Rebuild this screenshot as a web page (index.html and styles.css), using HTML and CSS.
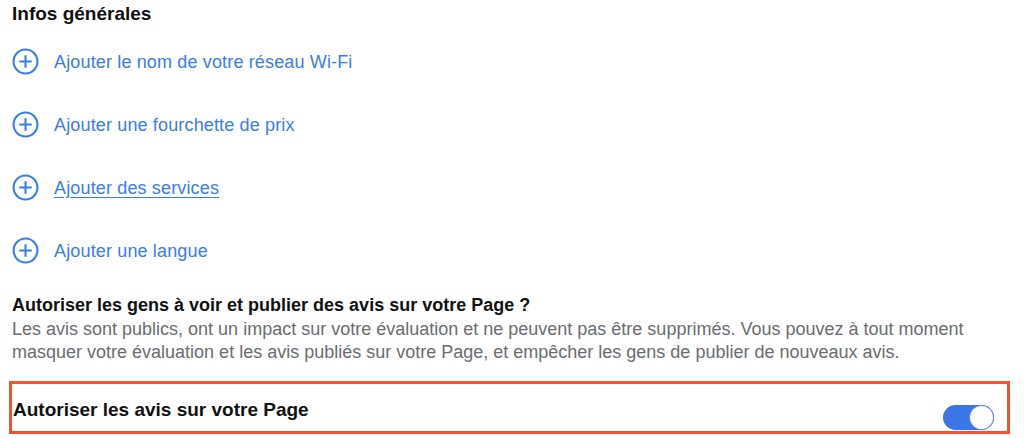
FILE: index.html
```html
<!DOCTYPE html>
<html lang="fr">
<head>
<meta charset="utf-8">
<link rel="stylesheet" href="styles.css">
</head>
<body>
<div class="page">
  <h2 class="title">Infos générales</h2>
  <ul class="list">
    <li class="item"><svg class="plus" viewBox="0 0 26 26"><circle cx="13" cy="13" r="11.5"/><path d="M13 7v12M7 13h12"/></svg><a class="link">Ajouter le nom de votre réseau Wi-Fi</a></li>
    <li class="item"><svg class="plus" viewBox="0 0 26 26"><circle cx="13" cy="13" r="11.5"/><path d="M13 7v12M7 13h12"/></svg><a class="link">Ajouter une fourchette de prix</a></li>
    <li class="item"><svg class="plus" viewBox="0 0 26 26"><circle cx="13" cy="13" r="11.5"/><path d="M13 7v12M7 13h12"/></svg><a class="link underline">Ajouter des services</a></li>
    <li class="item"><svg class="plus" viewBox="0 0 26 26"><circle cx="13" cy="13" r="11.5"/><path d="M13 7v12M7 13h12"/></svg><a class="link">Ajouter une langue</a></li>
  </ul>
  <h3 class="heading">Autoriser les gens à voir et publier des avis sur votre Page ?</h3>
  <p class="desc">Les avis sont publics, ont un impact sur votre évaluation et ne peuvent pas être supprimés. Vous pouvez à tout moment<br>masquer votre évaluation et les avis publiés sur votre Page, et empêcher les gens de publier de nouveaux avis.</p>
  <div class="box">
    <span class="box-label">Autoriser les avis sur votre Page</span>
    <span class="toggle"><span class="knob"></span></span>
  </div>
</div>
</body>
</html>
```
FILE: styles.css
```css
* { box-sizing: border-box; }
html, body { margin: 0; padding: 0; background: #fff; }
body { font-family: "Liberation Sans", Arial, sans-serif; color: #1c1e21; }
.page { padding-left: 12px; width: 1010px; }
.title { margin: 0; font-size: 19px; font-weight: 700; line-height: 28px; height: 28px; color: #111; }
.list { list-style: none; margin: 2px 0 0; padding: 0; }
.item { height: 63px; display: flex; align-items: center; }
.plus { width: 27px; height: 27px; margin-left: 0; margin-right: 15px; flex: none; fill: none; stroke: #3a7de6; stroke-width: 2; }
.link { color: #3a7de6; font-size: 18px; letter-spacing: 0.15px; line-height: 24px; }
.underline { text-decoration: underline; text-underline-offset: 3px; }
.heading { margin: 11px 0 0; font-size: 18px; font-weight: 700; line-height: 24px; color: #111; }
.desc { margin: 1px 0 0; font-size: 18px; line-height: 23px; color: #6b6c70; }
.box { margin: 17px 0 0 -3px; height: 53px; border: 3px solid #f4522d; display: flex; align-items: center; justify-content: space-between; padding: 4px 13px 0 1px; }
.box-label { font-size: 19px; font-weight: 700; color: #111; line-height: 24px; }
.toggle { align-self: flex-end; margin-bottom: 1px; width: 51px; height: 25px; border-radius: 13px; background: #3a76e8; display: flex; align-items: center; justify-content: flex-end; padding-right: 1px; }
.knob { width: 23px; height: 23px; border-radius: 50%; background: #fff; box-shadow: 0 0 0 1px #5a8ce0; }
```
